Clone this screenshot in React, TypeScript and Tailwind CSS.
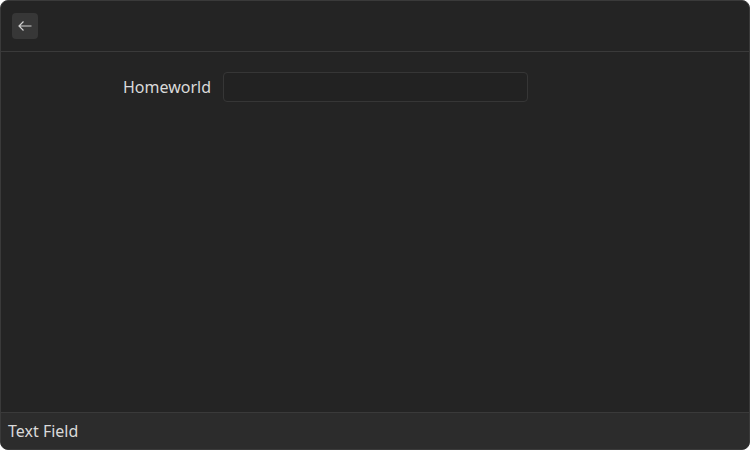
import React from "react";

export default function App() {
  return (
    <div className="w-[750px] h-[450px] bg-white" style={{ fontFamily: '"Noto Sans", "Open Sans", sans-serif' }}>
      <div className="w-full h-full flex flex-col rounded-lg border border-[#3a3a3a] bg-[#242424] overflow-hidden text-[#dadada]">
        <div className="h-[51px] shrink-0 flex items-center px-[11px] pb-[1px] border-b border-[#3a3a3a]">
          <button className="w-[26px] h-[26px] rounded-[4px] bg-[#373737] flex items-center justify-center text-[#cfcfcf]">
            <svg width="16" height="16" viewBox="0 0 16 16" fill="none" stroke="currentColor" strokeWidth="1.2">
              <path d="M14.5 8H2M6.5 3.5L2 8L6.5 12.5" />
            </svg>
          </button>
        </div>
        <div className="flex-1 pt-[20px]">
          <div className="flex items-center">
            <div className="w-[210px] text-right text-[16px] leading-[30px]">Homeworld</div>
            <input className="ml-[12px] w-[305px] h-[30px] rounded-[4px] border border-[#363636] bg-[#222222] outline-none px-2 text-[16px]" />
          </div>
        </div>
        <div className="h-[37px] shrink-0 border-t border-[#3a3a3a] bg-[#2c2c2c] flex items-center px-[7px] text-[16px]">
          Text Field
        </div>
      </div>
    </div>
  );
}
